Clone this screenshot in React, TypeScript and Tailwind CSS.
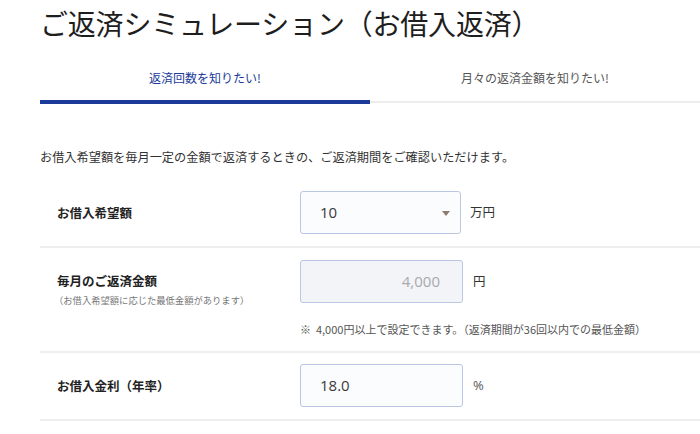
import React from 'react';

const jp = { fontFamily: '"Noto Sans CJK JP", "Noto Sans", sans-serif' };
const num = { fontFamily: '"Open Sans", Lato, "Noto Sans CJK JP", sans-serif' };

const Row: React.FC<{ children: React.ReactNode; className?: string }> = ({ children, className = '' }) => (
  <div className={`flex border-b-2 border-[#eeeeee] ${className}`}>{children}</div>
);

export default function App() {
  return (
    <div className="w-[700px] h-[434px] overflow-hidden bg-white text-[#222]" style={jp}>
      <div className="ml-[40px] w-[660px]">
        {/* title */}
        <h1 className="h-[46px] text-[28px] leading-[46px] font-normal text-[#1e1e1e] tracking-[-0.2px]">
          ご返済シミュレーション（お借入返済）
        </h1>

        {/* tabs */}
        <div className="flex items-start">
          <div className="w-[330px] pt-[23px] pb-[13px] border-b-4 border-[#1b3a9a] text-center text-[12px] leading-[18px] text-[#1b3a9a]">
            返済回数を知りたい!
          </div>
          <div className="w-[330px] pt-[23px] pb-[14px] border-b-2 border-[#ececec] text-center text-[12px] leading-[18px] text-[#555]">
            月々の返済金額を知りたい!
          </div>
        </div>

        <p className="mt-[44px] text-[12.2px] leading-[18px] text-[#333]">
          お借入希望額を毎月一定の金額で返済するときの、ご返済期間をご確認いただけます。
        </p>

        {/* row 1 */}
        <Row className="mt-[13px] py-[12px] items-center">
          <div className="w-[260px] pl-[17px] text-[12.5px] leading-[18px] font-bold text-[#222]">お借入希望額</div>
          <div className="flex items-center">
            <div className="relative w-[161px] h-[43px] rounded-[3px] border border-[#b9c6e4] bg-[#fbfcfe] flex items-center pl-[19px]">
              <span className="text-[15px] text-[#3a3a3a]" style={num}>10</span>
              <span className="absolute right-[10px] top-[19px] w-0 h-0 border-l-[4px] border-r-[4px] border-t-[5px] border-l-transparent border-r-transparent border-t-[#8c7b6e]" />
            </div>
            <span className="ml-[9px] text-[12.5px] text-[#333]">万円</span>
          </div>
        </Row>

        {/* row 2 */}
        <Row className="pt-[12px] pb-[14px]">
          <div className="w-[260px] pl-[17px] pt-[12px]">
            <div className="text-[12.5px] leading-[18px] font-bold text-[#222]">毎月のご返済金額</div>
            <div className="mt-[3px] -ml-[3px] text-[9.3px] leading-[14px] text-[#777]">（お借入希望額に応じた最低金額があります）</div>
          </div>
          <div>
            <div className="flex items-center">
              <div className="w-[163px] h-[43px] rounded-[3px] border border-[#b9c6e4] bg-[#f2f4f8] flex items-center justify-end pr-[22px]">
                <span className="text-[15px] text-[#a9a9a9]" style={num}>4,000</span>
              </div>
              <span className="ml-[10px] text-[12.5px] text-[#333]">円</span>
            </div>
            <div className="mt-[18px] text-[11px] leading-[16px] text-[#555] whitespace-nowrap">
              ※&nbsp;&nbsp;4,000円以上で設定できます。（返済期間が36回以内での最低金額）
            </div>
          </div>
        </Row>

        {/* row 3 */}
        <Row className="pt-[11px] pb-[12px] items-center">
          <div className="w-[260px] pl-[17px] text-[12.5px] leading-[18px] font-bold text-[#222]">お借入金利（年率）</div>
          <div className="flex items-center">
            <div className="w-[163px] h-[43px] rounded-[3px] border border-[#b9c6e4] bg-[#fbfcfe] flex items-center pl-[19px]">
              <span className="text-[15px] text-[#3a3a3a]" style={num}>18.0</span>
            </div>
            <span className="ml-[10px] text-[13px] text-[#555]" style={num}>%</span>
          </div>
        </Row>
      </div>
    </div>
  );
}
